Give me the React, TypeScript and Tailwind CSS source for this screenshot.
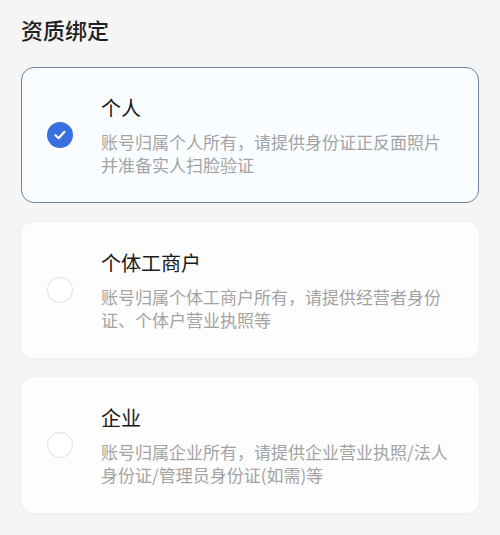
const FONT = "font-['Noto_Sans_CJK_SC','Noto_Sans',sans-serif]";

const OPTIONS = [
  {
    title: '个人',
    desc: ['账号归属个人所有，请提供身份证正反面照片', '并准备实人扫脸验证'],
  },
  {
    title: '个体工商户',
    desc: ['账号归属个体工商户所有，请提供经营者身份', '证、个体户营业执照等'],
  },
  {
    title: '企业',
    desc: ['账号归属企业所有，请提供企业营业执照/法人', '身份证/管理员身份证(如需)等'],
  },
];

function Radio({ checked }: { checked: boolean }) {
  if (checked) {
    return (
      <span className="flex h-[26px] w-[26px] shrink-0 items-center justify-center rounded-full bg-[#3a6fe2]">
        <svg width="14" height="14" viewBox="0 0 14 14" fill="none">
          <path d="M2.5 7.2 5.6 10.2 11.5 3.8" stroke="white" strokeWidth="2.2" strokeLinecap="round" strokeLinejoin="round" />
        </svg>
      </span>
    );
  }
  return <span className="h-[26px] w-[26px] shrink-0 rounded-full border-[1.5px] border-[#e0e0e0] bg-white" />;
}

export default function App() {
  const selected = 0;
  return (
    <main className={`min-h-[535px] w-[500px] bg-[#f5f5f5] px-[21px] pt-[14px] pb-6 ${FONT}`}>
      <h1 className="text-[22px] leading-[30px] font-medium text-[#1f1f1f]">资质绑定</h1>
      <div className="mt-[23px] flex flex-col gap-[19px]">
        {OPTIONS.map((o, i) => (
          <div
            key={o.title}
            className={`flex h-[136px] items-center rounded-[13px] pl-[25px] ${
              i === selected
                ? 'border-[1.5px] border-[#70819b] bg-[#fafdff]'
                : 'border-[1.5px] border-transparent bg-[#fdfdfd] shadow-[0_1px_4px_rgba(0,0,0,0.04)]'
            }`}
          >
            <Radio checked={i === selected} />
            <div className="ml-[28px] flex flex-col">
              <div className="text-[20px] leading-[28px] text-[#1a1a1a]">{o.title}</div>
              <div className="mt-[8px] text-[17px] leading-[23px] text-[#a3a3a3]">
                {o.desc.map((l) => (
                  <div key={l}>{l}</div>
                ))}
              </div>
            </div>
          </div>
        ))}
      </div>
    </main>
  );
}
